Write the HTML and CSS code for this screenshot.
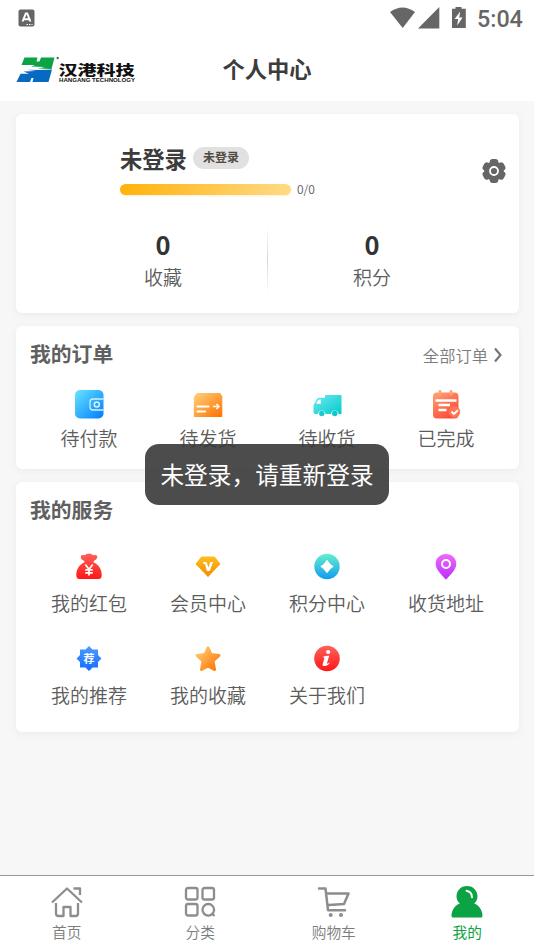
FILE: index.html
```html
<!DOCTYPE html>
<html lang="zh-CN">
<head>
<meta charset="utf-8">
<title>个人中心</title>
<link rel="stylesheet" href="styles.css">
</head>
<body>
<div class="app">
  <div class="statusbar">
    <svg class="status-app" width="17" height="18" viewBox="0 0 17 18"><rect x=".5" y=".5" width="16" height="17" rx="2" fill="#666"/><path d="M4.600 12.500 7.800 4.500h1.400l3.200 8M6 10.200h5" fill="none" stroke="#fff" stroke-width="2"/><path d="M8.500 15.500h6" stroke="#fff" stroke-width="1" stroke-dasharray="1.5 1"/></svg>
    <div class="status-right">
      <svg width="78" height="22" viewBox="390 7 78 22" fill="#666"><path d="M390 12Q402.500 3 415 12L402.700 28z"/><path d="M439.300 7v21.500h-21.300z"/><path d="M452 8.800h3.500V7h6v1.800h4.300v19.200h-13.800V8.800z"/><path d="M460.200 11.500 454.600 19h3.500l-.9 6.500 5.400-8h-3.400z" fill="#fff"/></svg>
      <span class="clock">5:04</span>
    </div>
  </div>
  <header class="navbar">
    <svg class="logo" width="122" height="28" viewBox="15 55 122 28">
      <path d="M24.500 57.500H37.500L36.500 61.500H39.500L41 57.500H54.500L51.500 69 38 68.500 45 67 31 66.400 35 65H21.500z" fill="#0ba343"/>
      <path d="M52 69.500 48.500 82H32.500L33.500 78H31.500L30 82H16.500L20.500 73.700H29L23.500 71.500 36 71 27 69.700 40 70z" fill="#076ac1"/>
      <circle cx="57.700" cy="58" r="1.200" fill="#666"/>
      <text class="logo-cn" transform="translate(58.500 75.300) scale(1 .7)" textLength="76" lengthAdjust="spacingAndGlyphs">汉港科技</text>
      <text class="logo-en" x="59" y="82" textLength="76" lengthAdjust="spacingAndGlyphs">HANGANG TECHNOLOGY</text>
    </svg>
    <h1 class="nav-title">个人中心</h1>
  </header>

  <main class="content">
    <section class="card profile">
      <div class="profile-top">
        <div class="identity">
          <div class="name-row"><span class="name">未登录</span><span class="badge">未登录</span></div>
          <div class="level"><div class="level-bar"></div><span class="level-value">0/0</span></div>
        </div>
        <svg class="gear" width="26" height="26" viewBox="-13 -13 26 26"><g fill="#666"><circle r="9.800"/><rect x="-4.300" y="-12" width="8.600" height="24" rx="3"/><rect x="-4.300" y="-12" width="8.600" height="24" rx="3" transform="rotate(60)"/><rect x="-4.300" y="-12" width="8.600" height="24" rx="3" transform="rotate(120)"/></g><circle r="4" fill="none" stroke="#fff" stroke-width="1.800"/></svg>
      </div>
      <div class="stats">
        <div class="stat"><b>0</b><span>收藏</span></div>
        <div class="divider"></div>
        <div class="stat"><b>0</b><span>积分</span></div>
      </div>
    </section>

    <section class="card orders">
      <div class="card-head"><h2>我的订单</h2><a class="more">全部订单<svg width="10" height="16" viewBox="0 0 10 16"><path d="M2 1.500 7.500 8 2 14.500" fill="none" stroke="#777" stroke-width="2.200"/></svg></a></div>
      <div class="grid">
        <div class="item"><svg width="30" height="30" viewBox="0 0 30 30"><defs><linearGradient id="blue" x1="0" y1="0" x2="1" y2="1"><stop offset="0" stop-color="#68e4ff"/><stop offset="1" stop-color="#007dff"/></linearGradient></defs><rect x="1" y="1" width="28.500" height="28.500" rx="5" fill="url(#blue)"/><path d="M29.500 10H19q-3 0-3 3v5q0 3 3 3h10.500" fill="none" stroke="#cff2ff" stroke-width="1.300"/><circle cx="22.800" cy="15.500" r="2.500" fill="none" stroke="#d8f4ff" stroke-width="1.500"/></svg><span>待付款</span></div>
        <div class="item"><svg width="30" height="30" viewBox="0 0 30 30"><defs><linearGradient id="orange" x1="0" y1="0" x2="1" y2="1"><stop offset="0" stop-color="#ffd07a"/><stop offset="1" stop-color="#ff7200"/></linearGradient></defs><path d="M4 4.500h23l1.800 3v20H1.300V8z" fill="url(#orange)" stroke="url(#orange)" stroke-linejoin="round"/><path d="M4.500 17.500h11M4.500 22.500h7.500" stroke="#fff" stroke-width="2.200" stroke-linecap="round"/><path d="M20 17.500h6m-2.500-2.500 2.500 2.500-2.500 2.500" fill="none" stroke="#fff" stroke-width="1.600"/></svg><span>待发货</span></div>
        <div class="item"><svg width="30" height="30" viewBox="0 0 30 30"><defs><linearGradient id="cyan" x1="0" y1="0" x2="1" y2="1"><stop offset="0" stop-color="#72e8f1"/><stop offset="1" stop-color="#00cccb"/></linearGradient></defs><path d="M13 6H29.500V25H26.500q-.5-3.500-3.700-3.500T19 25h-5.500q-.5-3.500-3.700-3.500T6 25H3.500Q1.500 25 1.500 23V16L5 10Q6 8.700 7.500 8.700H13z" fill="url(#cyan)"/><path d="M8 10.500h.8v4.200H4l2-3.500q.6-.7 2-.7z" fill="#fff"/><circle cx="9.800" cy="24.500" r="2.700" fill="#19c9cc"/><circle cx="22.800" cy="24.500" r="2.700" fill="#08c9c9"/></svg><span>待收货</span></div>
        <div class="item"><svg width="30" height="30" viewBox="0 0 30 30"><defs><linearGradient id="coral" x1="0" y1="0" x2="0.600" y2="1"><stop offset="0" stop-color="#ffa574"/><stop offset="1" stop-color="#fb4b3a"/></linearGradient></defs><rect x="2" y="3.500" width="25.500" height="26" rx="4" fill="url(#coral)"/><path d="M9 5V2.300M20 5V2.300" stroke="#ffa477" stroke-width="2.800" stroke-linecap="round"/><path d="M4.500 11.500h21M7.500 16h11.500M7.500 21h8" stroke="#fff" stroke-width="2.400"/><circle cx="23.500" cy="23" r="5.700" fill="#ff7655"/><path d="m20.500 22.800 2.400 2.200 4-3.700" fill="none" stroke="#fff" stroke-width="2"/></svg><span>已完成</span></div>
      </div>
    </section>

    <section class="card services">
      <div class="card-head"><h2>我的服务</h2></div>
      <div class="grid">
        <div class="item"><svg width="28" height="28" viewBox="0 0 28 28"><defs><linearGradient id="red" x1="0" y1="0" x2="0" y2="1"><stop offset="0" stop-color="#ff6259"/><stop offset="1" stop-color="#ff1718"/></linearGradient></defs><path d="M6 4Q6.500 2.500 8.500 3q2 .5 3-1 2.500-1 5 0 1 1.500 3 1 2.500-.5 3 1.500L21.500 7q-1 1-2.800 2v1.500c4.800 2 8 6.500 8 12.500q0 4-3 4H4.300q-3 0-3-4c0-6 3.200-10.500 8-12.500V9Q7.500 8 6.300 7q-.8-1.500-.3-3z" fill="url(#red)"/><path d="m10.300 12.500 3.700 4.800 3.700-4.800M10.300 17.800h7.400M10.300 20.800h7.400M14 17v6.500" fill="none" stroke="#fff" stroke-width="1.700"/></svg><span>我的红包</span></div>
        <div class="item"><svg width="28" height="28" viewBox="0 0 28 28"><defs><linearGradient id="gold" x1="0" y1="0" x2="0" y2="1"><stop offset="0" stop-color="#ffbe1f"/><stop offset="1" stop-color="#f38a00"/></linearGradient></defs><path d="M7.500 5h13L26 12 14 24.500 2 12z" fill="url(#gold)" stroke="url(#gold)" stroke-linejoin="round"/><path d="M9.300 10h3.200l2 5.500 1.700-5.500H19L15.800 19h-3L11 12H9.300z" fill="#fff"/></svg><span>会员中心</span></div>
        <div class="item"><svg width="28" height="28" viewBox="0 0 28 28"><defs><linearGradient id="teal" x1="0" y1="0" x2="0" y2="1"><stop offset="0" stop-color="#66efcd"/><stop offset="1" stop-color="#109cf0"/></linearGradient></defs><circle cx="14" cy="14.500" r="12.700" fill="url(#teal)"/><path d="M14 7.800Q16.500 12 20.700 14.500 16.500 17 14 21.200 11.500 17 7.300 14.500 11.500 12 14 7.800z" fill="#fff"/></svg><span>积分中心</span></div>
        <div class="item"><svg width="28" height="28" viewBox="0 0 28 28"><defs><linearGradient id="purple" x1="0" y1="0" x2="0" y2="1"><stop offset="0" stop-color="#ef69f8"/><stop offset="1" stop-color="#bd2dff"/></linearGradient></defs><path d="M14 2C8 2 3.700 6.400 3.700 12c0 5.500 6.500 11.500 9.300 14.700q1 1 2 0C17.800 23.500 24.300 17.500 24.300 12 24.300 6.400 20 2 14 2z" fill="url(#purple)"/><circle cx="14" cy="12" r="4" fill="none" stroke="#fff" stroke-width="2"/></svg><span>收货地址</span></div>
        <div class="item"><svg width="28" height="28" viewBox="0 0 28 28"><defs><linearGradient id="azure" x1="0" y1="0" x2="0" y2="1"><stop offset="0" stop-color="#4c9bff"/><stop offset="1" stop-color="#146cff"/></linearGradient></defs><path d="m14 2 3.500 3.500H23V11l3.500 3.500L23 18v5.500h-5.500L14 27l-3.500-3.500H5V18l-3.500-3.500L5 11V5.500h5.500z" fill="url(#azure)"/><text class="icon-text" x="14" y="18.500" text-anchor="middle">荐</text></svg><span>我的推荐</span></div>
        <div class="item"><svg width="28" height="28" viewBox="0 0 28 28"><path d="m14 3.800 3 6.700 8 1-6 5.500 1.500 8.500L14 22 7.500 25.500 9 17 3 11.500l8-1z" fill="url(#orange)" stroke="url(#orange)" stroke-width="3" stroke-linejoin="round"/></svg><span>我的收藏</span></div>
        <div class="item"><svg width="28" height="28" viewBox="0 0 28 28"><circle cx="14" cy="14.500" r="12.800" fill="url(#red)"/><circle cx="15.200" cy="8" r="2.100" fill="#fff"/><path d="M10 12.800q3-1.200 6.200-1l-2.400 7.900q1.500 0 3.200-1.400-1.500 3.300-4.800 3.700-3.200.3-2.500-2l1.700-5.700z" fill="#fff"/></svg><span>关于我们</span></div>
      </div>
    </section>
  </main>

  <nav class="tabbar">
    <div class="tab"><svg width="34" height="34" viewBox="0 0 34 34"><path d="M2 17.500 17 3.500l15 14M23.500 3.500H30V10M6 18v10.500Q6 31 8.500 31h5V22h7v9h5q2.500 0 2.500-2.500V18" fill="none" stroke="#8d8d8d" stroke-width="2.300" stroke-linejoin="round"/></svg><span>首页</span></div>
    <div class="tab"><svg width="34" height="34" viewBox="0 0 34 34"><g fill="none" stroke="#8d8d8d" stroke-width="2.300"><rect x="3" y="3" width="11.500" height="11.500" rx="2"/><rect x="19.500" y="3" width="11.500" height="11.500" rx="2"/><rect x="3" y="19" width="11.500" height="11.500" rx="2"/><circle cx="25.300" cy="24.800" r="5.800"/><path d="m28.500 28 3 3"/></g></svg><span>分类</span></div>
    <div class="tab"><svg width="34" height="34" viewBox="0 0 34 34"><path d="M2 3.500h6.500L11 25.200h17M10 8.500h21.500L27 19l-15 1" fill="none" stroke="#8d8d8d" stroke-width="2.500" stroke-linejoin="round" stroke-linecap="round"/><circle cx="13.700" cy="30" r="2" fill="#8d8d8d"/><circle cx="24" cy="30" r="2" fill="#8d8d8d"/></svg><span>购物车</span></div>
    <div class="tab active"><svg width="34" height="34" viewBox="0 0 34 34"><path d="M17 1C10.500 1 6.500 6 6.500 11.500c0 3 1.200 5.300 3.300 7C5 20.500 2 24.500 1.500 30q0 2.500 1 2.500H31.500q1 0 1-2.500C32 24.500 29 20.500 24.200 18.500c2.100-1.700 3.300-4 3.300-7C27.500 6 23.500 1 17 1z" fill="#0ba343"/><path d="M16.500 5.700q5.500 1 5.500 6.500" fill="none" stroke="#fff" stroke-width="2" stroke-linecap="round"/></svg><span>我的</span></div>
  </nav>
  <div class="toast">未登录，请重新登录</div>
</div>
</body>
</html>
```
FILE: styles.css
```css
* { box-sizing: border-box; }
body, h1, h2 { margin: 0; }
body { font-family: "Noto Sans CJK SC", sans-serif; font-weight: 350; color: #5c5c5c; background: #f7f7f7; }
svg { display: block; flex: none; }
.app { position: relative; width: 534px; height: 950px; overflow: hidden; display: flex; flex-direction: column; background: #f7f7f7; }

.statusbar { height: 36px; flex: none; display: flex; justify-content: space-between; align-items: center; padding: 0 12px 0 18px; background: #fff; }
.status-right { display: flex; align-items: center; gap: 9px; }
.clock { font: 500 23.300px/36px Roboto, sans-serif; color: #666; width: 45px; padding-top: 1px; }

.navbar { height: 65px; flex: none; display: grid; grid-template-columns: 1fr auto 1fr; align-items: center; padding: 0 15px 2px; background: #fff; }
.logo { margin-top: 2px; }
.nav-title { font-size: 22.300px; line-height: 32px; font-weight: 700; color: #3c3c3c; }
.logo-cn { font-size: 19px; font-weight: 900; fill: #111; }
.logo-en { font: bold 4.800px "Liberation Sans", sans-serif; fill: #111; }

.content { flex: 1; display: flex; flex-direction: column; gap: 13px; padding: 13px 15px 0 16px; }
.card { background: #fff; border-radius: 6px; box-shadow: 0 2px 9px rgba(0, 0, 0, .05); }

.profile { height: 199px; padding: 27px 12px 0 104px; }
.profile-top { display: flex; justify-content: space-between; height: 84px; }
.gear { margin-top: 17px; }
.name-row { display: flex; align-items: center; height: 34px; gap: 6px; }
.name { font-size: 22.300px; line-height: 32px; font-weight: 700; color: #3c3c3c; }
.badge { height: 22px; padding: 0 10px; border-radius: 11px; background: #e1e1e1; font-size: 12px; line-height: 20px; font-weight: 700; color: #514b41; }
.level { display: flex; align-items: center; gap: 6px; height: 28px; font-size: 12px; }
.level-value { margin-top: -1px; }
.level-bar { width: 171px; height: 11px; border-radius: 6px; background: linear-gradient(90deg, #ffb20d, #ffda86); box-shadow: 0 1px 2px rgba(255, 178, 13, .2); }
.stats { display: flex; margin-left: -104px; margin-right: -12px; padding-left: 43px; padding-right: 43px; }
.stat { flex: 1; display: flex; flex-direction: column; align-items: center; padding-top: 2px; }
.stat b { font-size: 25.500px; line-height: 33px; font-weight: 600; color: #333; }
.stat span { font-size: 19px; line-height: 30px; margin-top: 2px; }
.divider { width: 1px; height: 68px; margin-top: 1px; background: linear-gradient(#fff, #d5d5d5 50%, #fff); }

.orders { height: 143px; padding: 13px 13px 0 14px; }
.services { height: 250px; padding: 13px 13px 0 14px; }
.card-head { display: flex; justify-content: space-between; align-items: center; height: 28px; }
h2 { font-size: 20.800px; line-height: 28px; font-weight: 700; color: #606060; }
.more { display: flex; align-items: center; gap: 5px; font-size: 16.300px; line-height: 24px; color: #7c7c7c; margin-top: 4px; margin-right: 3px; }
.grid { display: grid; grid-template-columns: repeat(4, 119px); margin-left: -.5px; }
.item { display: flex; flex-direction: column; align-items: center; font-size: 19px; line-height: 28px; }
.orders .grid { padding-top: 22px; }
.orders .item { gap: 5px; }
.services .grid { padding-top: 29px; row-gap: 27px; }
.services .item { gap: 9px; }
.icon-text { font-size: 11px; font-weight: 700; fill: #fff; }

.tabbar { height: 75px; flex: none; display: flex; background: #fff; border-top: 1px solid #999; padding-top: 9px; }
.tab { flex: 1; display: flex; flex-direction: column; align-items: center; gap: 3px; font-size: 14.700px; line-height: 20px; color: #7c7c7c; }
.tab.active { color: #0ba343; font-weight: 400; }

.toast { position: absolute; left: 145px; top: 444px; width: 244px; height: 61px; border-radius: 14px; background: rgba(51, 51, 51, .88); color: #fff; font-size: 23.700px; line-height: 61px; text-align: center; white-space: nowrap; font-weight: 400; }
```
